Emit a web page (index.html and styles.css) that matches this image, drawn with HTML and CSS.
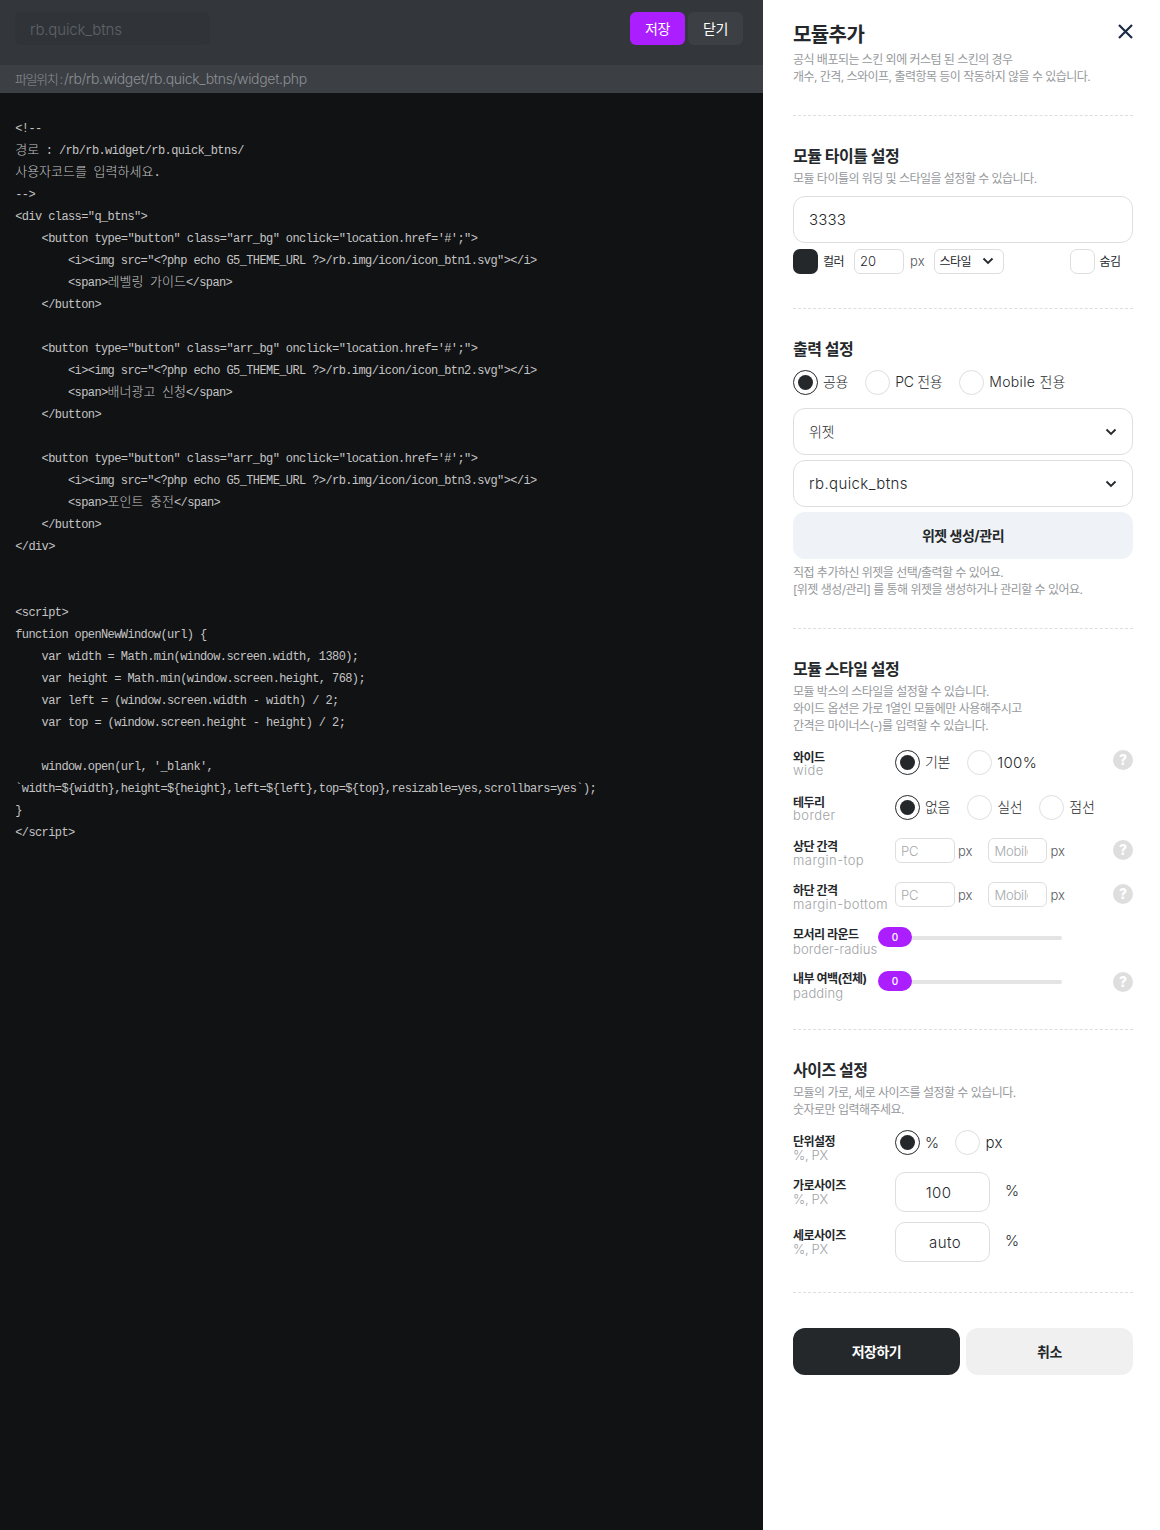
FILE: index.html
```html
<!DOCTYPE html>
<html lang="ko">
<head>
<meta charset="utf-8">
<title>모듈추가</title>
<link rel="stylesheet" href="styles.css">
</head>
<body>
<div class="page">
  <main class="editor">
    <div class="topbar">
      <input class="name-input" type="text" value="rb.quick_btns" readonly>
      <div class="top-actions">
        <button class="top-btn top-save" type="button">저장</button>
        <button class="top-btn top-close" type="button">닫기</button>
      </div>
    </div>
    <div class="pathbar"><span class="path-ko">파일위치 : </span>/rb/rb.widget/rb.quick_btns/widget.php</div>
    <div class="code">
      <div class="ln">&lt;!--</div>
      <div class="ln"><span class="ko">경로</span> : /rb/rb.widget/rb.quick_btns/</div>
      <div class="ln"><span class="ko">사용자코드를 입력하세요.</span></div>
      <div class="ln">--&gt;</div>
      <div class="ln">&lt;div class="q_btns"&gt;</div>
      <div class="ln">    &lt;button type="button" class="arr_bg" onclick="location.href='#';"&gt;</div>
      <div class="ln">        &lt;i&gt;&lt;img src="&lt;?php echo G5_THEME_URL ?&gt;/rb.img/icon/icon_btn1.svg"&gt;&lt;/i&gt;</div>
      <div class="ln">        &lt;span&gt;<span class="ko">레벨링 가이드</span>&lt;/span&gt;</div>
      <div class="ln">    &lt;/button&gt;</div>
      <div class="ln"></div>
      <div class="ln">    &lt;button type="button" class="arr_bg" onclick="location.href='#';"&gt;</div>
      <div class="ln">        &lt;i&gt;&lt;img src="&lt;?php echo G5_THEME_URL ?&gt;/rb.img/icon/icon_btn2.svg"&gt;&lt;/i&gt;</div>
      <div class="ln">        &lt;span&gt;<span class="ko">배너광고 신청</span>&lt;/span&gt;</div>
      <div class="ln">    &lt;/button&gt;</div>
      <div class="ln"></div>
      <div class="ln">    &lt;button type="button" class="arr_bg" onclick="location.href='#';"&gt;</div>
      <div class="ln">        &lt;i&gt;&lt;img src="&lt;?php echo G5_THEME_URL ?&gt;/rb.img/icon/icon_btn3.svg"&gt;&lt;/i&gt;</div>
      <div class="ln">        &lt;span&gt;<span class="ko">포인트 충전</span>&lt;/span&gt;</div>
      <div class="ln">    &lt;/button&gt;</div>
      <div class="ln">&lt;/div&gt;</div>
      <div class="ln"></div>
      <div class="ln"></div>
      <div class="ln">&lt;script&gt;</div>
      <div class="ln">function openNewWindow(url) {</div>
      <div class="ln">    var width = Math.min(window.screen.width, 1380);</div>
      <div class="ln">    var height = Math.min(window.screen.height, 768);</div>
      <div class="ln">    var left = (window.screen.width - width) / 2;</div>
      <div class="ln">    var top = (window.screen.height - height) / 2;</div>
      <div class="ln"></div>
      <div class="ln">    window.open(url, '_blank',</div>
      <div class="ln">`width=${width},height=${height},left=${left},top=${top},resizable=yes,scrollbars=yes`);</div>
      <div class="ln">}</div>
      <div class="ln">&lt;/script&gt;</div>
    </div>
  </main>

  <aside class="panel">
    <section class="sec sec-head">
      <button class="close" type="button" aria-label="닫기">
        <svg width="15" height="15" viewBox="0 0 15 15"><path d="M1 1l13 13M14 1L1 14" fill="none" stroke="#1b2b45" stroke-width="2.2"/></svg>
      </button>
      <h1 class="main-title">모듈추가</h1>
      <p class="desc">공식 배포되는 스킨 외에 커스텀 된 스킨의 경우<br>개수, 간격, 스와이프, 출력항목 등이 작동하지 않을 수 있습니다.</p>
    </section>

    <section class="sec sec-title">
      <h2 class="title">모듈 타이틀 설정</h2>
      <p class="desc">모듈 타이틀의 워딩 및 스타일을 설정할 수 있습니다.</p>
      <input class="field field-wide" type="text" value="3333">
      <div class="title-opts">
        <span class="swatch"></span>
        <span class="opt-label">컬러</span>
        <input class="small-input size-input" type="text" value="20">
        <span class="unit">px</span>
        <div class="small-select">스타일<svg class="chev" width="12" height="8" viewBox="0 0 12 8"><path d="M1.500 1.500L6 6l4.500-4.500" fill="none" stroke="#25282b" stroke-width="1.800"/></svg></div>
        <span class="hide-box"></span>
        <span class="opt-label">숨김</span>
      </div>
    </section>

    <section class="sec sec-output">
      <h2 class="title">출력 설정</h2>
      <div class="radios radios-top">
        <label class="radio"><input type="radio" name="out" checked>공용</label>
        <label class="radio"><input type="radio" name="out">PC 전용</label>
        <label class="radio radio-latin"><input type="radio" name="out">Mobile 전용</label>
      </div>
      <div class="select select-ko">위젯<svg class="chev" width="12" height="8" viewBox="0 0 12 8"><path d="M1.500 1.500L6 6l4.500-4.500" fill="none" stroke="#25282b" stroke-width="1.800"/></svg></div>
      <div class="select select-next">rb.quick_btns<svg class="chev" width="12" height="8" viewBox="0 0 12 8"><path d="M1.500 1.500L6 6l4.500-4.500" fill="none" stroke="#25282b" stroke-width="1.800"/></svg></div>
      <button class="manage" type="button">위젯 생성/관리</button>
      <p class="desc desc-after">직접 추가하신 위젯을 선택/출력할 수 있어요.<br>[위젯 생성/관리] 를 통해 위젯을 생성하거나 관리할 수 있어요.</p>
    </section>

    <section class="sec sec-style">
      <h2 class="title">모듈 스타일 설정</h2>
      <p class="desc">모듈 박스의 스타일을 설정할 수 있습니다.<br>와이드 옵션은 가로 1열인 모듈에만 사용해주시고<br>간격은 마이너스(-)를 입력할 수 있습니다.</p>
      <div class="rows">
        <div class="row row-tall">
          <div class="lab lab-tight"><strong>와이드</strong><span>wide</span></div>
          <div class="radios">
            <label class="radio"><input type="radio" name="wide" checked>기본</label>
            <label class="radio radio-big"><input type="radio" name="wide">100%</label>
          </div>
          <span class="help">?</span>
        </div>
        <div class="row row-short">
          <div class="lab lab-tight"><strong>테두리</strong><span>border</span></div>
          <div class="radios">
            <label class="radio"><input type="radio" name="border" checked>없음</label>
            <label class="radio"><input type="radio" name="border">실선</label>
            <label class="radio"><input type="radio" name="border">점선</label>
          </div>
        </div>
        <div class="row">
          <div class="lab lab-gap"><strong>상단 간격</strong><span>margin-top</span></div>
          <div class="pair">
            <input class="small-input gap-input" type="text" placeholder="PC"><span class="unit">px</span>
            <input class="small-input gap-input" type="text" placeholder="Mobile"><span class="unit">px</span>
          </div>
          <span class="help help-mid">?</span>
        </div>
        <div class="row row-tall">
          <div class="lab lab-gap"><strong>하단 간격</strong><span>margin-bottom</span></div>
          <div class="pair">
            <input class="small-input gap-input" type="text" placeholder="PC"><span class="unit">px</span>
            <input class="small-input gap-input" type="text" placeholder="Mobile"><span class="unit">px</span>
          </div>
          <span class="help help-mid">?</span>
        </div>
        <div class="row">
          <div class="lab lab-slider"><strong>모서리 라운드</strong><span>border-radius</span></div>
          <div class="slider"><span class="thumb">0</span></div>
        </div>
        <div class="row row-last">
          <div class="lab lab-slider"><strong>내부 여백(전체)</strong><span>padding</span></div>
          <div class="slider"><span class="thumb">0</span></div>
          <span class="help help-low">?</span>
        </div>
      </div>
    </section>

    <section class="sec sec-size">
      <h2 class="title">사이즈 설정</h2>
      <p class="desc">모듈의 가로, 세로 사이즈를 설정할 수 있습니다.<br>숫자로만 입력해주세요.</p>
      <div class="size-rows">
        <div class="row row-unit">
          <div class="lab lab-unit"><strong>단위설정</strong><span>%, PX</span></div>
          <div class="radios">
            <label class="radio radio-big radio-pct"><input type="radio" name="unit" checked>%</label>
            <label class="radio radio-big"><input type="radio" name="unit">px</label>
          </div>
        </div>
        <div class="row row-size">
          <div class="lab lab-unit lab-size"><strong>가로사이즈</strong><span>%, PX</span></div>
          <input class="size-field size-w" type="text" value="100"><span class="size-unit">%</span>
        </div>
        <div class="row row-size row-size-last">
          <div class="lab lab-unit lab-size"><strong>세로사이즈</strong><span>%, PX</span></div>
          <input class="size-field size-h" type="text" value="auto"><span class="size-unit">%</span>
        </div>
      </div>
    </section>

    <div class="actions">
      <button class="act act-save" type="button">저장하기</button>
      <button class="act act-cancel" type="button">취소</button>
    </div>
  </aside>
</div>
</body>
</html>
```
FILE: styles.css
```css
* { box-sizing: border-box; }
html, body { margin: 0; padding: 0; background: #fff; }
body {
  font-family: "Inter", "Noto Sans CJK KR", sans-serif;
  color: #25282b;
  font-size: 14px;
}
h1, h2, p { margin: 0; }
button, input { font-family: inherit; }

.page { display: flex; width: 1160px; height: 1530px; overflow: hidden; }

/* left editor */
.editor { width: 763px; flex: none; background: #111214; display: flex; flex-direction: column; }
.topbar {
  height: 65px; flex: none; background: #33373b;
  display: flex; justify-content: space-between; align-items: flex-start;
  padding: 12px 20px 0 15px;
}
.name-input {
  width: 195px; height: 33px; border: 0; border-radius: 6px; outline: 0;
  background: #303438; color: #5f6368; font-size: 15px; padding: 1px 15px 0; letter-spacing: -.15px; font-weight: 300;
}
.top-actions { display: flex; gap: 3px; }
.top-btn {
  width: 55px; height: 33px; border: 0; border-radius: 6px; font-size: 14px; color: #fff; letter-spacing: -.5px; padding: 0 0 2px;
}
.top-save { background: #aa1eff; }
.top-close { background: #3c4045; }
.pathbar {
  height: 28px; flex: none; background: #3c4045; color: #8d9094;
  font-size: 14px; line-height: 28px; padding-left: 15px; letter-spacing: -.32px; font-weight: 300;
}
.path-ko { font-size: 13px; letter-spacing: -1.400px; }
.code {
  padding: 25px 0 0 15.200px; flex: 1;
  font-family: "Liberation Mono", "Noto Sans CJK KR", monospace;
  font-size: 12px; letter-spacing: -.6px; color: #c4c4c4;
}
.ln { height: 22px; line-height: 22px; white-space: pre; }
.ko { font-size: 13px; letter-spacing: 0; word-spacing: -1.200px; line-height: 1; font-weight: 300; }

/* right panel */
.panel { flex: 1; padding: 0 27px 0 30px; position: relative; }
.sec { border-bottom: 1px dashed #dedede; padding: 30px 0; }
.sec-head { height: 116px; padding-top: 25px; }
.close { position: absolute; top: 24px; right: 27px; width: 15px; height: 15px; border: 0; background: none; padding: 0; display: block; }
.close svg { display: block; }
.main-title { font-size: 20px; line-height: 20px; font-weight: 700; letter-spacing: -.6px; }
.title { font-size: 16px; line-height: 20px; font-weight: 700; letter-spacing: -.5px; }
.desc { font-size: 12px; line-height: 17px; color: #96999c; letter-spacing: -.53px; margin-top: 4px; }
.sec-head .desc { margin-top: 6px; }
.desc-after { margin-top: 5px; }

.field-wide {
  display: block; width: 100%; height: 47px; margin-top: 9px;
  border: 1px solid #dedede; border-radius: 12px; outline: 0; padding: 0 15px;
  font-size: 15px; color: #25282b; font-weight: 300; letter-spacing: .2px;
}
.title-opts { display: flex; align-items: center; height: 26px; margin-top: 5px; margin-bottom: 4px; }
.swatch { width: 25px; height: 25px; border-radius: 7px; background: #25282b; flex: none; }
.opt-label { font-size: 12px; margin: -2px 0 0 5px; letter-spacing: -.5px; }
.small-input {
  height: 25px; border: 1px solid #dedede; border-radius: 6px; outline: 0;
  font-size: 13px; padding: 0 5px; color: #25282b; background: #fff; font-weight: 300;
}
.small-input::placeholder { color: #a5a8ab; }
.size-input { width: 50px; margin-left: 10px; }
.unit { font-size: 13px; margin-left: 6px; color: #55585b; font-weight: 300; }
.small-select {
  width: 70px; height: 25px; margin-left: 9px; border: 1px solid #dedede; border-radius: 6px;
  font-size: 12px; letter-spacing: -.5px; display: flex; align-items: center; justify-content: space-between; padding: 0 9px 2px 5px;
}
.small-select .chev { margin-top: 2px; }
.hide-box { width: 25px; height: 25px; border: 1px solid #dedede; border-radius: 7px; margin-left: 66px; flex: none; }

.radios { display: flex; gap: 17px; align-items: center; }
.radios-top { margin-top: 11px; margin-bottom: 13px; }
.radio { display: flex; align-items: flex-start; gap: 5px; font-size: 14px; line-height: 23px; letter-spacing: -.3px; font-weight: 300; }
.radio-latin { letter-spacing: .3px; }
.radio-big { font-size: 15px; line-height: 25px; letter-spacing: .35px; }
.radio-pct { letter-spacing: -.6px; }
.radio input {
  appearance: none; -webkit-appearance: none; margin: 0; width: 25px; height: 25px; flex: none;
  border: 1px solid #dedede; border-radius: 50%; background: #fff; display: grid; place-items: center;
}
.radio input:checked { border: 1.500px solid #25282b; }
.radio input:checked::before { content: ""; width: 15px; height: 15px; border-radius: 50%; background: #25282b; }

.select {
  height: 47px; border: 1px solid #dedede; border-radius: 12px; padding: 0 15px;
  display: flex; align-items: center; justify-content: space-between; font-size: 15px; font-weight: 300; letter-spacing: .4px;
}
.select-ko { padding-bottom: 2px; font-size: 14px; letter-spacing: -.3px; }
.select-ko .chev { margin-top: 2px; }
.select-next { margin-top: 5px; }
.manage {
  display: block; width: 100%; height: 47px; margin-top: 5px; border: 0; border-radius: 12px; padding: 0 0 2px;
  background: #eff3f8; color: #25282b; font-size: 14px; font-weight: 700; letter-spacing: -.5px;
}

.rows { margin-top: 16px; }
.row { display: flex; align-items: flex-start; height: 44px; position: relative; }
.row-tall { height: 45px; }
.row-short { height: 43px; }
.row-last { height: 28px; }
.lab { width: 102px; flex: none; display: flex; flex-direction: column; line-height: 14px; padding-top: 1px; white-space: nowrap; }
.lab strong { font-size: 12px; font-weight: 700; letter-spacing: -.5px; }
.lab span { font-size: 13px; color: #a0a3a6; font-weight: 300; letter-spacing: .45px; }
.lab-tight span { margin-top: -2px; }
.lab-gap { padding-top: 2px; }
.lab-gap span { margin-top: -1px; }
.lab-slider { width: 85px; }
.lab-slider span { letter-spacing: .15px; }
.help {
  position: absolute; right: 0; top: 0; width: 20px; height: 20px; border-radius: 50%;
  background: #dedede; color: #fff; font-size: 14px; font-weight: 800; line-height: 20px; text-align: center;
}
.help-mid { top: 2px; }
.help-low { top: 1px; }
.pair { display: flex; align-items: center; }
.gap-input { width: 60px; padding-right: 18px; }
.gap-input::placeholder { letter-spacing: -.2px; }
.gap-input + .unit + .gap-input { width: 59px; }
.pair .unit { margin: 0 16px 0 3px; }
.slider { width: 184px; height: 4px; margin-top: 9px; background: #e4e4e4; border-radius: 2px; position: relative; }
.thumb {
  position: absolute; left: 0; top: -9px; width: 34px; height: 20px; border-radius: 10px;
  background: #aa1eff; color: #fff; font-size: 10px; font-weight: 500; line-height: 20px; text-align: center;
}

.size-rows { margin-top: 12px; }
.row-unit { height: 42px; }
.row-size { height: 50px; }
.row-size-last { height: 40px; }
.lab-unit { padding-top: 5px; }
.lab-size { padding-top: 7px; }
.lab-unit span { font-size: 13px; line-height: 13px; letter-spacing: -.3px; }
.size-field {
  width: 95px; height: 40px; border: 1px solid #dedede; border-radius: 10px; outline: 0;
  text-align: center; font-size: 15px; color: #25282b; font-weight: 300; letter-spacing: .4px;
}
.size-w { padding: 0 8px 0 0; }
.size-h { padding: 0 0 0 5px; }
.size-unit { font-size: 15px; margin-left: 15px; line-height: 38px; font-weight: 300; }

.actions { display: flex; gap: 6px; margin-top: 35px; }
.act { flex: 1; height: 47px; border: 0; border-radius: 12px; padding: 0 0 2px; font-size: 14px; font-weight: 700; letter-spacing: -.5px; }
.act-save { background: #25282b; color: #fff; }
.act-cancel { background: #f0f0f0; color: #25282b; }
```
